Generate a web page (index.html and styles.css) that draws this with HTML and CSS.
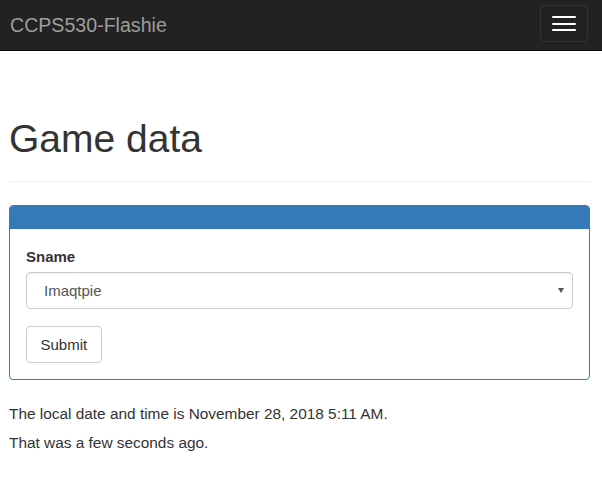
FILE: index.html
```html
<!DOCTYPE html>
<html lang="en">
<head>
<meta charset="utf-8">
<title>Game data</title>
<link rel="stylesheet" href="styles.css">
</head>
<body>
<nav class="navbar">
  <a class="brand" href="#">CCPS530-Flashie</a>
  <button class="toggle" type="button" aria-label="Toggle navigation">
    <span class="bar"></span>
    <span class="bar"></span>
    <span class="bar"></span>
  </button>
</nav>
<main class="container">
  <div class="page-header">
    <h1>Game data</h1>
  </div>
  <div class="panel">
    <div class="panel-heading"></div>
    <form class="panel-body">
      <div class="form-group">
        <label class="label" for="sname">Sname</label>
        <div class="select-wrap">
          <select id="sname" class="form-control">
            <option>Imaqtpie</option>
          </select>
        </div>
      </div>
      <button type="submit" class="btn">Submit</button>
    </form>
  </div>
  <p class="text">The local date and time is November 28, 2018 5:11 AM.</p>
  <p class="text">That was a few seconds ago.</p>
</main>
</body>
</html>
```
FILE: styles.css
```css
* { box-sizing: border-box; }
html, body { margin: 0; padding: 0; }
body {
  font-family: "Liberation Sans", Arial, Helvetica, sans-serif;
  font-size: 15px;
  color: #333;
  background: #fff;
}
.navbar {
  height: 51px;
  background: #222;
  border-bottom: 1px solid #080808;
  display: flex;
  justify-content: space-between;
  align-items: flex-start;
  padding: 0 14px 0 10px;
}
.brand {
  font-size: 19.6px;
  line-height: 50px;
  color: #9d9d9d;
  text-decoration: none;
}
.toggle {
  margin-top: 5px;
  width: 48px;
  height: 37px;
  padding: 10px 11px 9px;
  background: transparent;
  border: 1px solid #333;
  border-radius: 4px;
  display: flex;
  flex-direction: column;
  gap: 4.5px;
}
.bar {
  display: block;
  width: 24px;
  height: 2px;
  background: #fff;
  border-radius: 1px;
}
.container {
  padding: 0 12px 0 9px;
}
.page-header {
  margin: 66px 0 23px;
  padding-bottom: 21px;
  border-bottom: 1px solid #eee;
}
h1 {
  margin: 0;
  font-size: 39px;
  line-height: 43px;
  font-weight: 400;
  color: #333;
}
.panel {
  border: 1px solid #337ab7;
  border-radius: 4px;
  margin-bottom: 24px;
  overflow: hidden;
}
.panel-heading {
  height: 23px;
  background: #337ab7;
}
.panel-body {
  padding: 17px 16px 16px;
  margin: 0;
}
.form-group {
  margin-bottom: 17px;
}
.label {
  display: block;
  font-weight: 700;
  font-size: 15px;
  line-height: 21px;
  margin-bottom: 5px;
}
.select-wrap {
  position: relative;
}
.select-wrap::after {
  content: "";
  position: absolute;
  right: 9px;
  top: 16px;
  border-left: 3.5px solid transparent;
  border-right: 3.5px solid transparent;
  border-top: 5px solid #555;
  pointer-events: none;
}
.form-control {
  display: block;
  width: 100%;
  height: 37px;
  padding: 0 24px 0 17px;
  font-family: inherit;
  font-size: 15px;
  color: #555;
  background: #fff;
  border: 1px solid #ccc;
  border-radius: 4px;
  -webkit-appearance: none;
  appearance: none;
  box-shadow: inset 0 1px 1px rgba(0,0,0,.075);
}
.btn {
  display: block;
  height: 37px;
  padding: 0 13.5px;
  font-family: inherit;
  font-size: 15px;
  color: #333;
  background: #fff;
  border: 1px solid #ccc;
  border-radius: 4px;
}
.text {
  margin: 0 0 10px;
  font-size: 15.4px;
  line-height: 19px;
}
```
